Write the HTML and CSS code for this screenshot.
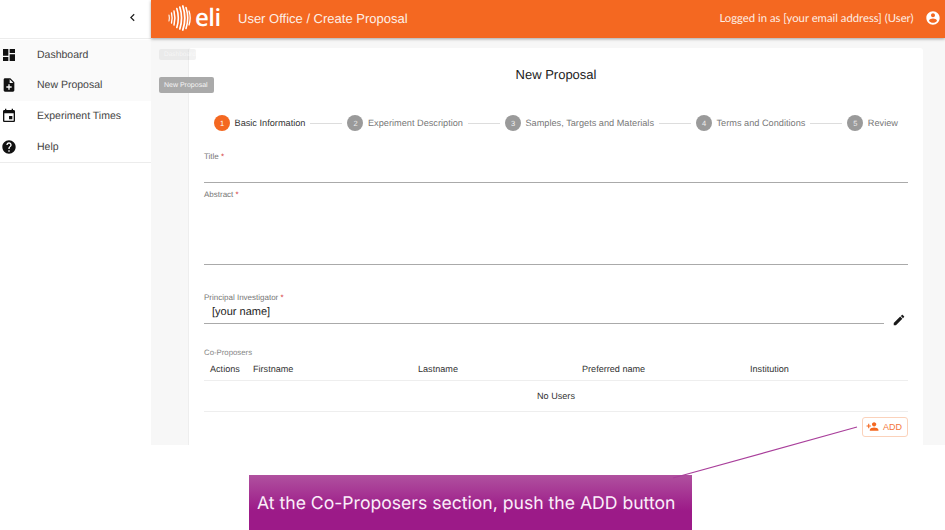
FILE: index.html
```html
<!DOCTYPE html>
<html lang="en">
<head>
<meta charset="utf-8">
<title>Create Proposal</title>
<link rel="stylesheet" href="styles.css">
</head>
<body>
<div class="app">
  <aside class="sidebar">
    <div class="side-top">
      <svg class="chevron" viewBox="0 0 24 24"><path d="M15.41 7.41L14 6l-6 6 6 6 1.41-1.41L10.83 12z"/></svg>
    </div>
    <nav class="nav">
      <a class="nav-item shaded"><svg viewBox="0 0 24 24"><path d="M3 13h8V3H3v10zm0 8h8v-6H3v6zm10 0h8V11h-8v10zm0-18v6h8V3h-8z"/></svg><span>Dashboard</span></a>
      <a class="nav-item shaded"><svg viewBox="0 0 24 24"><path d="M14 2H6c-1.1 0-1.99.9-1.99 2L4 20c0 1.1.89 2 1.99 2H18c1.1 0 2-.9 2-2V8l-6-6zm2 14h-3v3h-2v-3H8v-2h3v-3h2v3h3v2zm-3-7V3.5L18.5 9H13z"/></svg><span>New Proposal</span></a>
      <a class="nav-item"><svg viewBox="0 0 24 24"><path d="M17 12h-5v5h5v-5zM16 1v2H8V1H6v2H5c-1.11 0-1.99.9-1.99 2L3 19c0 1.1.89 2 2 2h14c1.1 0 2-.9 2-2V5c0-1.1-.9-2-2-2h-1V1h-2zm3 18H5V8h14v11z"/></svg><span>Experiment Times</span></a>
      <a class="nav-item"><svg viewBox="0 0 24 24"><path d="M12 2C6.48 2 2 6.48 2 12s4.48 10 10 10 10-4.48 10-10S17.52 2 12 2zm1 17h-2v-2h2v2zm2.07-7.75l-.9.92C13.45 12.9 13 13.5 13 15h-2v-.5c0-1.1.45-2.1 1.17-2.83l1.24-1.26c.37-.36.59-.86.59-1.41 0-1.1-.9-2-2-2s-2 .9-2 2H8c0-2.21 1.79-4 4-4s4 1.79 4 4c0 .88-.36 1.68-.93 2.25z"/></svg><span>Help</span></a>
    </nav>
  </aside>
  <div class="right">
    <header class="topbar">
      <div class="logo">
        <svg class="logo-mark" viewBox="0 0 24 28" fill="none" stroke="#fff" stroke-linecap="round">
          <path d="M1 11q.7 3 0 6" stroke-width="1.100"/>
          <path d="M3.500 9q1.200 5 0 10" stroke-width="1.300"/>
          <path d="M6 7q1.800 7 0 14" stroke-width="1.500"/>
          <path d="M8.800 4.500q3 9.500 0 19" stroke-width="1.600"/>
          <path d="M11.800 3q3.500 11 0 22" stroke-width="1.700"/>
          <path d="M14.800 2q4 12 0 24" stroke-width="1.800"/>
          <path d="M18 3.500q3.500 10.500 0 21" stroke-width="1.600"/>
          <path d="M21 7q2.400 7 0 14" stroke-width="1.300"/>
        </svg>
        <span class="logo-text">eli</span>
      </div>
      <div class="crumb">User Office / Create Proposal</div>
      <div class="user">Logged in as [your email address] (User)</div>
      <svg class="avatar" viewBox="0 0 24 24"><path d="M12 2C6.48 2 2 6.48 2 12s4.48 10 10 10 10-4.48 10-10S17.52 2 12 2zm0 3c1.66 0 3 1.34 3 3s-1.340 3-3 3-3-1.340-3-3 1.340-3 3-3zm0 14.200c-2.500 0-4.710-1.280-6-3.220.03-1.990 4-3.080 6-3.080 1.990 0 5.970 1.090 6 3.080-1.290 1.940-3.500 3.220-6 3.220z"/></svg>
    </header>
    <main class="main">
      <section class="card">
        <h1 class="card-title">New Proposal</h1>
        <ol class="stepper">
          <li class="step active"><b>1</b><span>Basic Information</span></li>
          <li class="step-line"></li>
          <li class="step"><b>2</b><span>Experiment Description</span></li>
          <li class="step-line"></li>
          <li class="step"><b>3</b><span>Samples, Targets and Materials</span></li>
          <li class="step-line"></li>
          <li class="step"><b>4</b><span>Terms and Conditions</span></li>
          <li class="step-line"></li>
          <li class="step"><b>5</b><span>Review</span></li>
        </ol>
        <div class="field field-title">
          <label>Title <i>*</i></label>
        </div>
        <div class="field field-abstract">
          <label>Abstract <i>*</i></label>
        </div>
        <div class="pi-row">
          <div class="field field-pi">
            <label>Principal Investigator <i>*</i></label>
            <div class="value">[your name]</div>
          </div>
          <svg class="edit" viewBox="0 0 24 24"><path d="M3 17.250V21h3.750L17.810 9.940l-3.750-3.750L3 17.250zM20.710 7.040c.39-.39.39-1.020 0-1.410l-2.340-2.340c-.39-.39-1.020-.39-1.410 0l-1.830 1.830 3.750 3.750 1.830-1.830z"/></svg>
        </div>
        <div class="co-label">Co-Proposers</div>
        <table class="users">
          <thead>
            <tr><th class="c-act">Actions</th><th class="c-first">Firstname</th><th class="c-last">Lastname</th><th class="c-pref">Preferred name</th><th>Institution</th></tr>
          </thead>
          <tbody>
            <tr><td colspan="5">No Users</td></tr>
          </tbody>
        </table>
        <div class="actions">
          <button class="add" type="button"><svg viewBox="0 0 24 24"><path d="M15 12c2.210 0 4-1.790 4-4s-1.790-4-4-4-4 1.790-4 4 1.790 4 4 4zm-9-2V7H4v3H1v2h3v3h2v-3h3v-2H6zm9 4c-2.670 0-8 1.340-8 4v2h16v-2c0-2.660-5.330-4-8-4z"/></svg>ADD</button>
        </div>
      </section>
    </main>
  </div>
</div>
<div class="ghost ghost-dash">Dashboard</div>
<div class="ghost ghost-new">New Proposal</div>
<div class="callout">At the Co-Proposers section, push the ADD button</div>
<svg class="pointer" viewBox="0 0 945 530"><line x1="857" y1="427" x2="673" y2="478"/></svg>
</body>
</html>
```
FILE: styles.css
```css
* { box-sizing: border-box; }
html, body { margin: 0; height: 100%; }
body {
  width: 945px;
  height: 530px;
  position: relative;
  overflow: hidden;
  background: #fff;
  font-family: "Liberation Sans", Arial, sans-serif;
  color: #333;
  text-rendering: geometricPrecision;
}
.app { display: flex; height: 445px; }

/* sidebar */
.sidebar { width: 151px; flex: none; background: #fff; }
.side-top {
  height: 39px;
  display: flex;
  align-items: center;
  justify-content: flex-end;
  padding: 0 11px 3px 0;
  border-bottom: 1px solid #ececec;
}
.chevron { width: 15px; height: 15px; fill: #222; }
.nav { display: flex; flex-direction: column; padding: .6px 0 .4px; border-bottom: 1px solid #ececec; }
.nav-item {
  height: 30.600px;
  display: flex;
  align-items: center;
  gap: 20px;
  padding-left: 1px;
  font-size: 10.500px;
  color: #444;
}
.nav-item svg { width: 16px; height: 16px; fill: #111; flex: none; }
.nav-item.shaded { background: #fafafa; }

/* header */
.right { flex: 1; display: flex; flex-direction: column; min-width: 0; }
.topbar {
  height: 38px;
  flex: none;
  display: flex;
  align-items: center;
  background: #f46821;
  color: #fff;
  padding: 0 4px 2px 17px;
  box-shadow: 0 1px 3px rgba(0,0,0,.35);
  position: relative;
}
.logo { display: flex; align-items: center; gap: 3px; width: 70px; flex: none; }
.logo-mark { width: 24px; height: 28px; flex: none; }
.logo-text { font-family: "Open Sans", sans-serif; font-weight: 600; font-size: 24px; line-height: 28px; letter-spacing: -.5px; }
.crumb { font-size: 13px; flex: 1; color: #fdf0e8; }
.user { font-family: Lato, sans-serif; font-size: 11.300px; margin-right: 11.500px; color: #fdeee5; }
.avatar { width: 16px; height: 16px; fill: #fff; flex: none; }

/* main */
.main { flex: 1; background: #f7f7f7; padding: 10px 22px 0 37px; min-height: 0; overflow: hidden; }
.card {
  background: #fff;
  height: 100%;
  padding: 0 15px 0 15px;
  border-radius: 3px 3px 0 0;
  border-left: 1px solid #eee;
  display: flex;
  flex-direction: column;
}
.card-title { margin: 19px 0 0; height: 16px; line-height: 16px; font-size: 13px; font-weight: 400; text-align: center; color: #222; }

/* stepper */
.stepper { list-style: none; margin: 32px 0 0; padding: 0 10px; display: flex; align-items: center; height: 16px; flex: none; }
.step { display: flex; align-items: center; gap: 4.500px; font-size: 9.200px; color: #777; white-space: nowrap; }
.step b {
  width: 16px; height: 16px; border-radius: 50%;
  background: #9a9a9a; color: #eee;
  font-weight: 400; font-size: 7.500px;
  display: flex; align-items: center; justify-content: center;
}
.step.active b { background: #f46821; color: #fff; }
.step.active { color: #333; }
.step-line { flex: 1; height: 1px; background: #ddd; margin: 0 5px; }

/* fields */
.field label { display: block; font-size: 8px; line-height: 10px; color: #777; }
.field label i { font-style: normal; color: #d32f2f; }
.field { border-bottom: 1px solid #aaa; flex: none; }
.field-title { margin-top: 21px; height: 31px; }
.field-abstract { margin-top: 7px; height: 75px; }
.pi-row { display: flex; align-items: flex-end; margin-top: 28px; height: 31px; flex: none; }
.field-pi { flex: 1; height: 31px; }
.value { padding-left: 8px; font-size: 11px; line-height: 13px; margin-top: 3px; color: #222; }
.edit { width: 14px; height: 14px; fill: #1a1a1a; flex: none; margin: 0 2px 0 8px; position: relative; top: 3px; }
.co-label { margin-top: 24px; font-size: 7.800px; line-height: 10px; color: #888; flex: none; }

/* table */
.users { width: 100%; border-collapse: collapse; table-layout: fixed; font-size: 9.100px; color: #333; margin-top: 1px; flex: none; }
.users th { height: 21px; font-weight: 400; text-align: left; padding: 0; border-bottom: 1px solid #eee; }
.users td { height: 31px; text-align: center; padding: 0; border-bottom: 1px solid #eee; }
.c-act { width: 49px; padding-left: 6px !important; }
.c-first { width: 165px; }
.c-last { width: 164px; }
.c-pref { width: 168px; }
.actions { display: flex; justify-content: flex-end; margin-top: 5px; flex: none; }
.add {
  width: 46px; height: 20px;
  display: flex; align-items: center; justify-content: center; gap: 4px;
  padding: 0 2px 0 0;
  background: #fff;
  border: 1px solid #fbd2bb;
  border-radius: 3px;
  color: #f4763a;
  font: 400 9px "Liberation Sans", Arial, sans-serif;
}
.add svg { width: 13px; height: 13px; fill: #f46821; }

/* overlays */
.ghost {
  position: absolute;
  left: 159px;
  border-radius: 2px;
  font-size: 7px;
  color: #fff;
  display: flex; align-items: center;
  white-space: nowrap;
}
.ghost-dash { top: 49px; height: 11px; width: 37px; padding-left: 5px; font-size: 6.500px; background: rgba(0,0,0,.05); color: rgba(255,255,255,.6); }
.ghost-new { top: 77px; height: 16px; width: 55px; padding-left: 5px; background: #aaa; color: #f4f4f4; }
.callout {
  position: absolute;
  left: 249px; top: 475px;
  width: 443px; height: 55px;
  padding: 1px 0 0 8px;
  display: flex; align-items: center;
  background: linear-gradient(#b0519f, #9c1a88 65%);
  color: #fbeefa;
  font-family: Inter, sans-serif;
  font-size: 17.600px;
  white-space: nowrap;
}
.pointer { position: absolute; left: 0; top: 0; width: 945px; height: 530px; pointer-events: none; }
.pointer line { stroke: #a93f9b; stroke-width: 1.200; }
```
